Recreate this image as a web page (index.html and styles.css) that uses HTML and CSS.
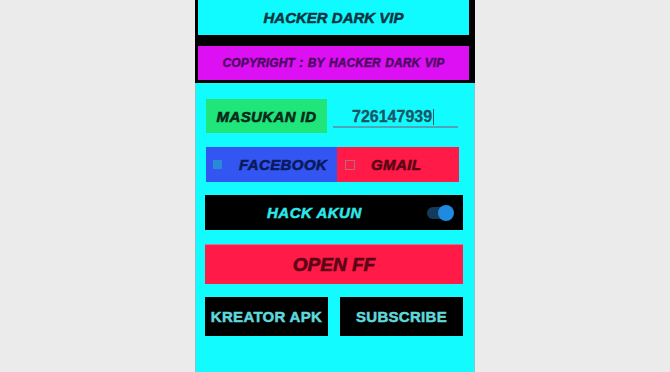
FILE: index.html
```html
<!DOCTYPE html>
<html lang="id">
<head>
    <meta charset="UTF-8" />
    <meta name="viewport" content="width=device-width, initial-scale=1.0"/>
    <title>Hacker Dark VIP</title>
    <link rel="stylesheet" href="styles.css">
</head>
<body>
    <div class="phone">
        <div class="header">
            <div class="title-bar">HACKER DARK VIP</div>
            <div class="copyright">COPYRIGHT : BY HACKER DARK VIP</div>
        </div>
        <div class="content">
            <div class="id-row">
                <div class="id-label">MASUKAN ID</div>
                <div class="id-input"><span>726147939</span><i class="caret"></i></div>
            </div>
            <div class="login-row">
                <div class="login-option fb"><span class="box"></span>FACEBOOK</div>
                <div class="login-option gm"><span class="box"></span>GMAIL</div>
            </div>
            <div class="hack-bar">
                <span>HACK AKUN</span>
                <div class="toggle"><div class="thumb"></div></div>
            </div>
            <div class="open-btn">OPEN FF</div>
            <div class="bottom-row">
                <div class="dark-btn">KREATOR APK</div>
                <div class="dark-btn">SUBSCRIBE</div>
            </div>
        </div>
    </div>
</body>
</html>
```

FILE: styles.css
```css
body {
    margin: 0;
    background-color: #ebebeb;
    font-family: "Liberation Sans", Arial, sans-serif;
    font-weight: bold;
}
.phone {
    width: 280px;
    height: 372px;
    margin: 0 auto;
    overflow: hidden;
    display: flex;
    flex-direction: column;
}
.header {
    background-color: #000;
    padding: 0 6px 3px 3px;
}
.title-bar {
    height: 35px;
    background-color: #10fbff;
    color: #0c3440;
    font-size: 15px;
    font-style: italic;
    display: flex;
    align-items: center;
    justify-content: center;
    -webkit-text-stroke: 0.5px #0c3440;
}
.copyright {
    height: 34px;
    margin-top: 11px;
    background-color: #dc10f2;
    color: #4a0a60;
    font-size: 12px;
    font-style: italic;
    display: flex;
    align-items: center;
    justify-content: center;
    letter-spacing: 0.1px;
    word-spacing: 1px;
    -webkit-text-stroke: 0.4px #4a0a60;
}
.content {
    flex: 1;
    background-color: #12fcff;
    border-left: 1px solid #7fc8d0;
    border-right: 1px solid #7fc8d0;
    padding: 16px 11px 0 9px;
}
.id-row {
    display: flex;
    height: 34px;
    margin-left: 1px;
}
.id-label {
    width: 121px;
    background-color: #1fe57a;
    color: #0a2a1a;
    font-size: 15px;
    font-style: italic;
    display: flex;
    align-items: center;
    justify-content: center;
    letter-spacing: 0.4px;
    -webkit-text-stroke: 0.6px #0a2a1a;
}
.id-input {
    width: 125px;
    margin-left: 6px;
    height: 29px;
    border-bottom: 2px solid #4aa6b8;
    color: #1b5566;
    font-size: 16px;
    line-height: 18px;
    display: flex;
    align-items: flex-end;
    padding-left: 19px;
    box-sizing: border-box;
    -webkit-text-stroke: 0.3px #1b5566;
}
.caret {
    width: 1px;
    height: 16px;
    background-color: #1b5566;
    margin: 0 0 1px 1px;
}
.login-row {
    display: flex;
    height: 35px;
    width: 253px;
    margin: 14px 0 0 1px;
}
.login-option {
    display: flex;
    align-items: center;
    font-size: 15px;
    font-style: italic;
    letter-spacing: 0.4px;
}
.login-option .box {
    width: 9px;
    height: 9px;
    margin-right: 17px;
}
.fb {
    width: 131px;
    background-color: #3356f2;
    color: #0b1a5c;
    padding-left: 7px;
    box-sizing: border-box;
    -webkit-text-stroke: 0.6px #0b1a5c;
}
.fb .box {
    background-color: #2a8ad6;
}
.gm {
    flex: 1;
    background-color: #ff1a48;
    color: #5a0614;
    padding-left: 8px;
    -webkit-text-stroke: 0.6px #5a0614;
}
.gm .box {
    border: 1px solid #b07080;
    width: 8px;
    height: 8px;
    margin-right: 16px;
}
.hack-bar {
    margin-top: 13px;
    height: 35px;
    background-color: #000;
    color: #2ee8e8;
    font-size: 15px;
    font-style: italic;
    display: flex;
    align-items: center;
    padding-left: 62px;
    padding-right: 10px;
    letter-spacing: 0.5px;
    -webkit-text-stroke: 0.5px #2ee8e8;
}
.hack-bar span {
    flex: 1;
}
.toggle {
    width: 26px;
    height: 12px;
    border-radius: 6px;
    background-color: #143a5c;
    position: relative;
}
.thumb {
    position: absolute;
    right: -1px;
    top: -2px;
    width: 16px;
    height: 16px;
    border-radius: 50%;
    background-color: #1e8ae0;
}
.open-btn {
    margin-top: 14px;
    height: 40px;
    background-color: #ff1a48;
    border-top: 1px solid #e07090;
    box-sizing: border-box;
    color: #5a0614;
    font-size: 19px;
    font-style: italic;
    display: flex;
    align-items: center;
    justify-content: center;
    -webkit-text-stroke: 0.6px #5a0614;
}
.bottom-row {
    display: flex;
    gap: 12px;
    margin-top: 13px;
}
.dark-btn {
    flex: 1;
    height: 39px;
    background-color: #000;
    color: #5fd8dc;
    font-size: 15px;
    letter-spacing: 0.3px;
    display: flex;
    align-items: center;
    justify-content: center;
    -webkit-text-stroke: 0.5px #5fd8dc;
}
```
